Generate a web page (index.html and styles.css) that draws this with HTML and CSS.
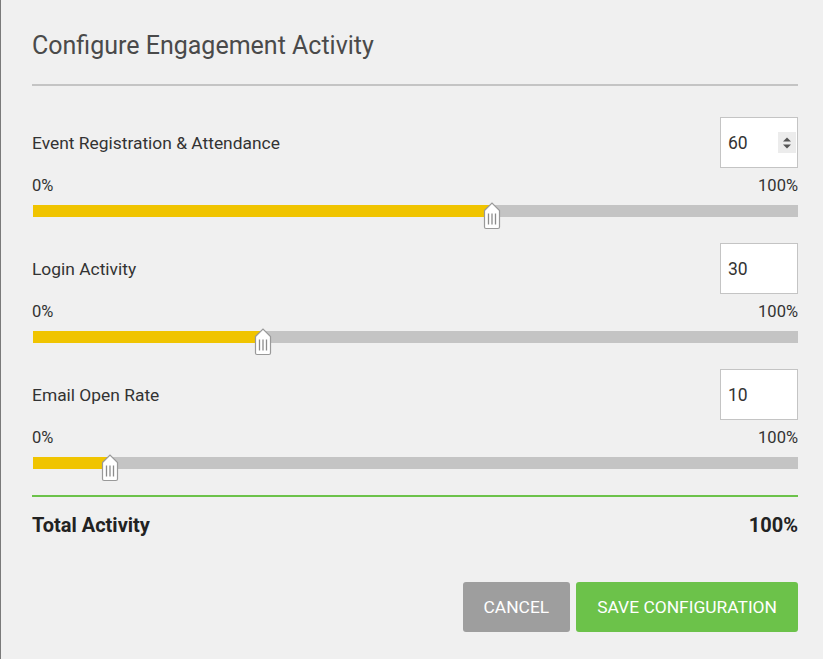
FILE: index.html
```html
<!DOCTYPE html>
<html lang="en">
<head>
<meta charset="utf-8">
<title>Configure Engagement Activity</title>
<link rel="stylesheet" href="styles.css">
</head>
<body>
<div class="modal">
  <header class="modal-header">
    <h1 class="modal-title">Configure Engagement Activity</h1>
  </header>

  <section class="activity">
    <div class="activity-head">
      <span class="activity-label">Event Registration &amp; Attendance</span>
      <div class="field">
        <input class="field-input" type="number" value="60">
        <span class="spinner">
          <svg width="10" height="16" viewBox="0 0 10 16"><path d="M1 6.5 L5 2.5 L9 6.5 Z" fill="#555"/><path d="M1 9.5 L5 13.5 L9 9.5 Z" fill="#555"/></svg>
        </span>
      </div>
    </div>
    <div class="scale"><span>0%</span><span>100%</span></div>
    <div class="track">
      <div class="fill" style="width:60%"></div>
      <span class="handle" style="left:60%">
        <svg width="18" height="28" viewBox="0 0 18 28"><path d="M1.5 8.5 L9 1 L16.5 8.5 V25 Q16.5 26.5 15 26.5 H3 Q1.5 26.5 1.5 25 Z" fill="#fff" stroke="#999" stroke-width="1.2"/><path d="M5.5 11.5 V22.5 M9 11.5 V22.5 M12.5 11.5 V22.5" stroke="#8c8c8c" stroke-width="1.3"/></svg>
      </span>
    </div>
  </section>

  <section class="activity">
    <div class="activity-head">
      <span class="activity-label">Login Activity</span>
      <div class="field">
        <input class="field-input" type="number" value="30">
      </div>
    </div>
    <div class="scale"><span>0%</span><span>100%</span></div>
    <div class="track">
      <div class="fill" style="width:30%"></div>
      <span class="handle" style="left:30%">
        <svg width="18" height="28" viewBox="0 0 18 28"><path d="M1.5 8.5 L9 1 L16.5 8.5 V25 Q16.5 26.5 15 26.5 H3 Q1.5 26.5 1.5 25 Z" fill="#fff" stroke="#999" stroke-width="1.2"/><path d="M5.5 11.5 V22.5 M9 11.5 V22.5 M12.5 11.5 V22.5" stroke="#8c8c8c" stroke-width="1.3"/></svg>
      </span>
    </div>
  </section>

  <section class="activity">
    <div class="activity-head">
      <span class="activity-label">Email Open Rate</span>
      <div class="field">
        <input class="field-input" type="number" value="10">
      </div>
    </div>
    <div class="scale"><span>0%</span><span>100%</span></div>
    <div class="track">
      <div class="fill" style="width:10%"></div>
      <span class="handle" style="left:10%">
        <svg width="18" height="28" viewBox="0 0 18 28"><path d="M1.5 8.5 L9 1 L16.5 8.5 V25 Q16.5 26.5 15 26.5 H3 Q1.5 26.5 1.5 25 Z" fill="#fff" stroke="#999" stroke-width="1.2"/><path d="M5.5 11.5 V22.5 M9 11.5 V22.5 M12.5 11.5 V22.5" stroke="#8c8c8c" stroke-width="1.3"/></svg>
      </span>
    </div>
  </section>

  <div class="total">
    <span>Total Activity</span>
    <span>100%</span>
  </div>

  <div class="actions">
    <button class="btn btn-cancel" type="button">CANCEL</button>
    <button class="btn btn-save" type="button">SAVE CONFIGURATION</button>
  </div>
</div>
</body>
</html>
```

FILE: styles.css
```css
html, body {
  margin: 0;
  padding: 0;
  height: 100%;
}

body {
  background: #f0f0f0;
  font-family: Roboto, "Liberation Sans", Arial, sans-serif;
  color: #333;
  border-left: 1px solid #7a7a7a;
  box-sizing: border-box;
}

.modal {
  padding: 0 25px 0 31px;
}

.modal-header {
  padding-top: 31px;
  padding-bottom: 23px;
  border-bottom: 2px solid #c4c4c4;
}

.modal-title {
  margin: 0;
  font-size: 25px;
  line-height: 30px;
  font-weight: 400;
  color: #4a4a4a;
}

.activity {
  padding-top: 31px;
}

.activity + .activity {
  padding-top: 26px;
}

.activity-head {
  display: flex;
  align-items: center;
  justify-content: space-between;
}

.activity-label {
  font-size: 17.4px;
  color: #333;
}

.field {
  position: relative;
  width: 78px;
  height: 51px;
  box-sizing: border-box;
  border: 1px solid #c4c4c4;
  background: #fff;
}

.field-input {
  width: 100%;
  height: 100%;
  box-sizing: border-box;
  border: 0;
  padding: 0 0 0 7px;
  margin: 0;
  background: transparent;
  font-family: Roboto, "Liberation Sans", Arial, sans-serif;
  font-size: 17.5px;
  color: #333;
  outline: none;
  -moz-appearance: textfield;
}

.field-input::-webkit-outer-spin-button,
.field-input::-webkit-inner-spin-button {
  -webkit-appearance: none;
  margin: 0;
}

.spinner {
  position: absolute;
  right: 1px;
  top: 14px;
  width: 18px;
  height: 21px;
  background: #ececec;
  display: flex;
  align-items: center;
  justify-content: center;
}

.scale {
  display: flex;
  justify-content: space-between;
  margin-top: 8px;
  font-size: 16.5px;
  line-height: 20px;
  color: #333;
}

.track {
  position: relative;
  margin-top: 9px;
  margin-left: 1px;
  height: 12px;
  background: #c4c4c4;
}

.fill {
  height: 100%;
  background: #f0c400;
}

.handle {
  position: absolute;
  top: -3px;
  width: 18px;
  height: 28px;
  margin-left: -9px;
  display: block;
}

.handle svg {
  display: block;
}

.total {
  margin-top: 26px;
  border-top: 2px solid #6cc24a;
  padding-top: 16px;
  display: flex;
  justify-content: space-between;
  font-size: 20px;
  line-height: 24px;
  font-weight: 700;
  color: #222;
}

.actions {
  margin-top: 45px;
  display: flex;
  justify-content: flex-end;
  gap: 6px;
}

.btn {
  height: 50px;
  padding: 0 21px;
  border: 0;
  border-radius: 3px;
  font-family: Roboto, "Liberation Sans", Arial, sans-serif;
  font-size: 17.4px;
  color: #fff;
  cursor: pointer;
}

.btn-cancel {
  background: #9e9e9e;
}

.btn-save {
  background: #6cc24a;
}
```
